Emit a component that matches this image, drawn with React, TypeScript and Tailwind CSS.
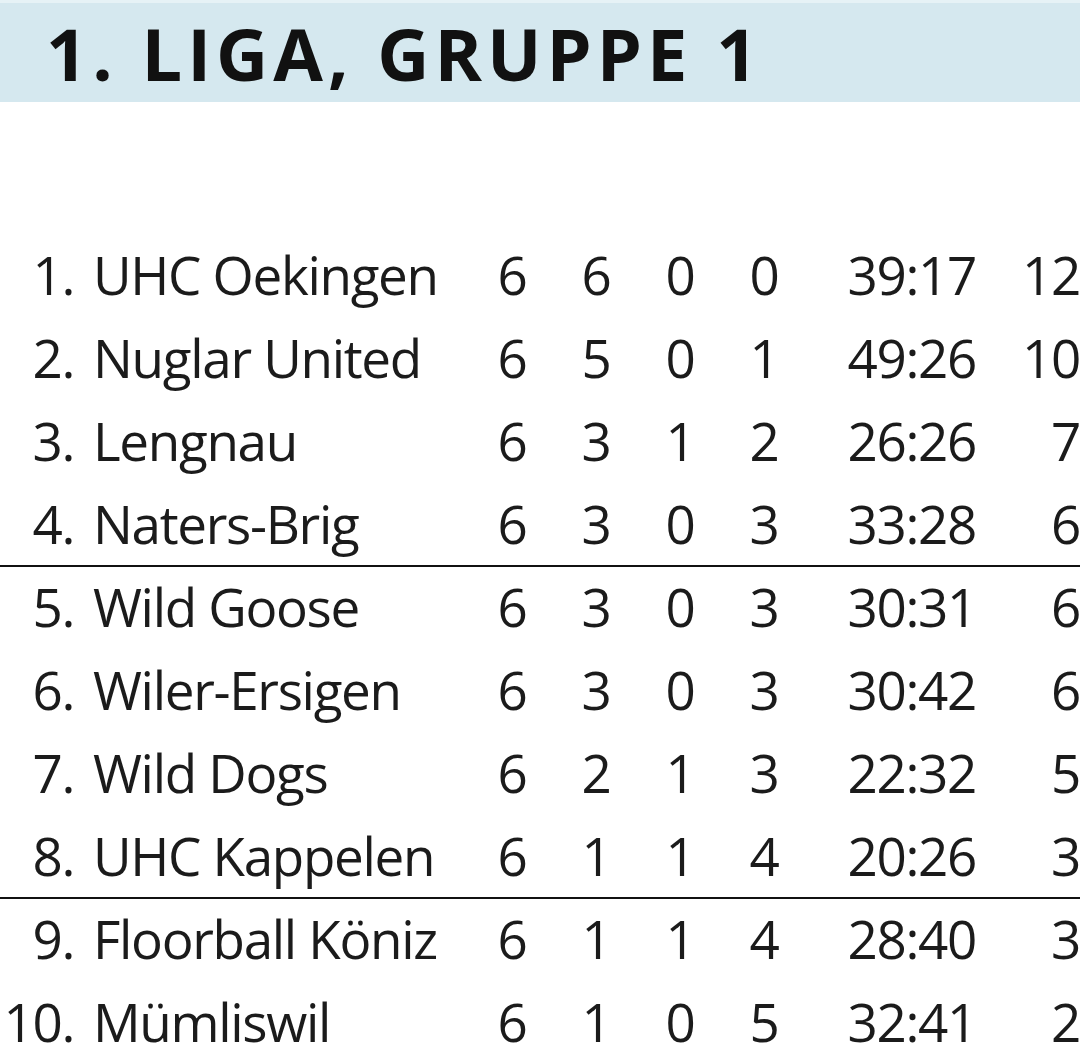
import React from "react";

const rows: [string, string, string, string, string, string, string, string][] = [
  ["1.", "UHC Oekingen", "6", "6", "0", "0", "39:17", "12"],
  ["2.", "Nuglar United", "6", "5", "0", "1", "49:26", "10"],
  ["3.", "Lengnau", "6", "3", "1", "2", "26:26", "7"],
  ["4.", "Naters-Brig", "6", "3", "0", "3", "33:28", "6"],
  ["5.", "Wild Goose", "6", "3", "0", "3", "30:31", "6"],
  ["6.", "Wiler-Ersigen", "6", "3", "0", "3", "30:42", "6"],
  ["7.", "Wild Dogs", "6", "2", "1", "3", "22:32", "5"],
  ["8.", "UHC Kappelen", "6", "1", "1", "4", "20:26", "3"],
  ["9.", "Floorball Köniz", "6", "1", "1", "4", "28:40", "3"],
  ["10.", "Mümliswil", "6", "1", "0", "5", "32:41", "2"],
];

export default function App() {
  return (
    <div className="w-[1080px] h-[1043px] overflow-hidden bg-white text-[#1b1b1b]" style={{ fontFamily: '"Open Sans", "Noto Sans", sans-serif' }}>
      <div className="h-[102px] bg-[#d5e8ef] border-t-[3px] border-[#e6f2f6] flex items-center pl-[46px]">
        <h1 className="text-[72px] font-bold tracking-[0.07em] text-[#111] leading-none" style={{ fontFamily: '"Open Sans", sans-serif' }}>
          1. LIGA, GRUPPE 1
        </h1>
      </div>
      <div className="mt-[131px]">
        {rows.map((r, i) => (
          <div
            key={i}
            className={`relative grid grid-cols-[74px_396px_84px_84px_84px_84px_170px_104px] h-[83px] items-center text-[53px] tracking-[-0.025em] leading-none ${i === 3 || i === 7 ? "shadow-[0_2px_0_#111]" : ""}`}
          >
            <div className="text-right">{r[0]}</div>
            <div className="pl-[19px] whitespace-nowrap">{r[1]}</div>
            <div className="text-center">{r[2]}</div>
            <div className="text-center">{r[3]}</div>
            <div className="text-center">{r[4]}</div>
            <div className="text-center">{r[5]}</div>
            <div className="text-right">{r[6]}</div>
            <div className="text-right">{r[7]}</div>
          </div>
        ))}
      </div>
    </div>
  );
}
